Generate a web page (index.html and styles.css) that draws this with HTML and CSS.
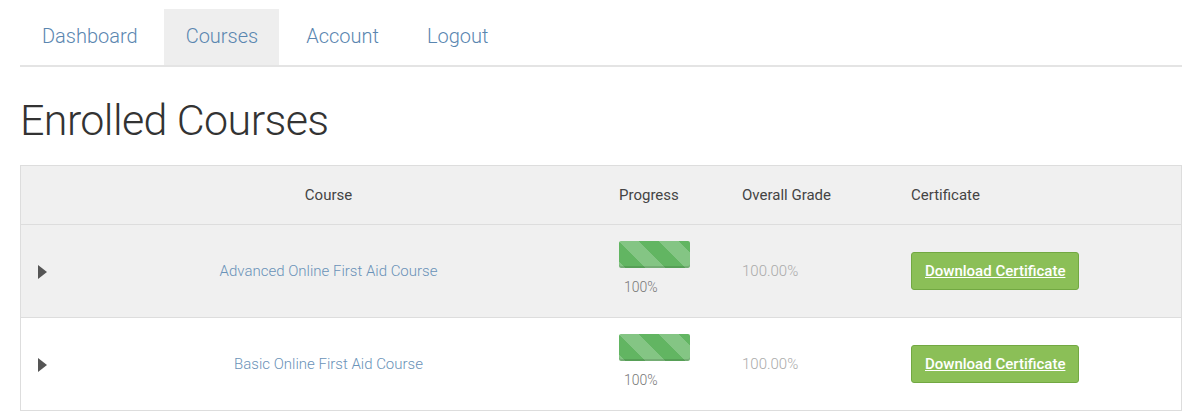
FILE: index.html
```html
<!DOCTYPE html>
<html lang="en">

<head>
    <meta charset="utf-8">
    <meta name="viewport" content="width=device-width, initial-scale=1.0">
    <title>Enrolled Courses</title>
    <link rel="stylesheet" href="styles.css">
</head>

<body>

    <nav class="tabs">
        <a class="tab" href="#">Dashboard</a>
        <a class="tab aktiv" href="#">Courses</a>
        <a class="tab" href="#">Account</a>
        <a class="tab" href="#">Logout</a>
    </nav>

    <h1>Enrolled Courses</h1>

    <table class="kurser">
        <thead>
            <tr>
                <th class="pil-kol"></th>
                <th class="kursus-kol">Course</th>
                <th class="progress-kol">Progress</th>
                <th class="grade-kol">Overall Grade</th>
                <th>Certificate</th>
            </tr>
        </thead>
        <tbody>
            <tr class="stribe">
                <td class="pil"><span class="trekant"></span></td>
                <td class="kursus"><a href="#">Advanced Online First Aid Course</a></td>
                <td class="progress">
                    <div class="bar"></div>
                    <p class="procent">100%</p>
                </td>
                <td class="grade">100.00%</td>
                <td><a class="knap" href="#">Download Certificate</a></td>
            </tr>
            <tr>
                <td class="pil"><span class="trekant"></span></td>
                <td class="kursus"><a href="#">Basic Online First Aid Course</a></td>
                <td class="progress">
                    <div class="bar"></div>
                    <p class="procent">100%</p>
                </td>
                <td class="grade">100.00%</td>
                <td><a class="knap" href="#">Download Certificate</a></td>
            </tr>
        </tbody>
    </table>

</body>

</html>
```

FILE: styles.css
```css
body {
    margin: 0;
    padding: 9px 18px 0 20px;
    font-family: Roboto, "Liberation Sans", sans-serif;
    color: #333;
    background: #fff;
}

.tabs {
    display: flex;
    gap: 5px;
    border-bottom: 2px solid #e4e4e4;
}

.tab {
    padding: 15px 21px 0 22px;
    height: 41px;
    font-size: 20px;
    font-weight: 300;
    color: #5a86b0;
    text-decoration: none;
}

.aktiv {
    background: #eee;
}

h1 {
    margin: 28px 0 20px 0;
    font-size: 43px;
    font-weight: 300;
    color: #333;
    letter-spacing: -0.6px;
}

.kurser {
    width: 100%;
    border-collapse: collapse;
    table-layout: fixed;
    border: 1px solid #ddd;
    font-size: 15px;
}

.kurser th {
    height: 58px;
    padding: 0 0 0 23px;
    text-align: left;
    font-weight: 400;
    color: #444;
    background: #f0f0f0;
    border-bottom: 1px solid #ddd;
}

.kurser td {
    height: 92px;
    padding: 0 0 0 23px;
    border-bottom: 1px solid #ddd;
    vertical-align: middle;
}

.pil-kol {
    width: 17px;
}

.kurser th.kursus-kol {
    width: 535px;
    text-align: center;
    padding-left: 0;
}

.progress-kol {
    width: 100px;
}

.grade-kol {
    width: 146px;
}

.stribe td {
    background: #f0f0f0;
}

.kurser td.pil {
    padding-left: 17px;
}

.trekant {
    display: block;
    width: 0;
    height: 0;
    margin-top: 2px;
    border-top: 7px solid transparent;
    border-bottom: 7px solid transparent;
    border-left: 9px solid #555;
}

.kurser td.kursus {
    text-align: center;
    padding-left: 0;
}

.kursus a {
    color: #6a92b8;
    text-decoration: none;
    font-weight: 300;
}

.kurser td.progress {
    vertical-align: top;
    padding-top: 16px;
    height: 76px;
}

.bar {
    width: 71px;
    height: 27px;
    border-radius: 2px;
    background-color: #62b562;
    background-image: linear-gradient(45deg, rgba(255, 255, 255, .22) 25%, transparent 25%, transparent 50%, rgba(255, 255, 255, .22) 50%, rgba(255, 255, 255, .22) 75%, transparent 75%, transparent);
    background-size: 40px 40px;
    box-shadow: inset 0 -2px 0 rgba(0, 0, 0, .12);
}

.procent {
    margin: 11px 0 0 5px;
    color: #777;
    font-size: 14px;
    font-weight: 300;
}

.grade {
    color: #aaa;
    font-weight: 300;
}

.knap {
    display: inline-block;
    padding: 9px 13px 9px 13px;
    background: #8bbf57;
    border: 1px solid #72a842;
    border-radius: 3px;
    color: #fff;
    font-size: 15px;
    font-weight: 500;
}
```
